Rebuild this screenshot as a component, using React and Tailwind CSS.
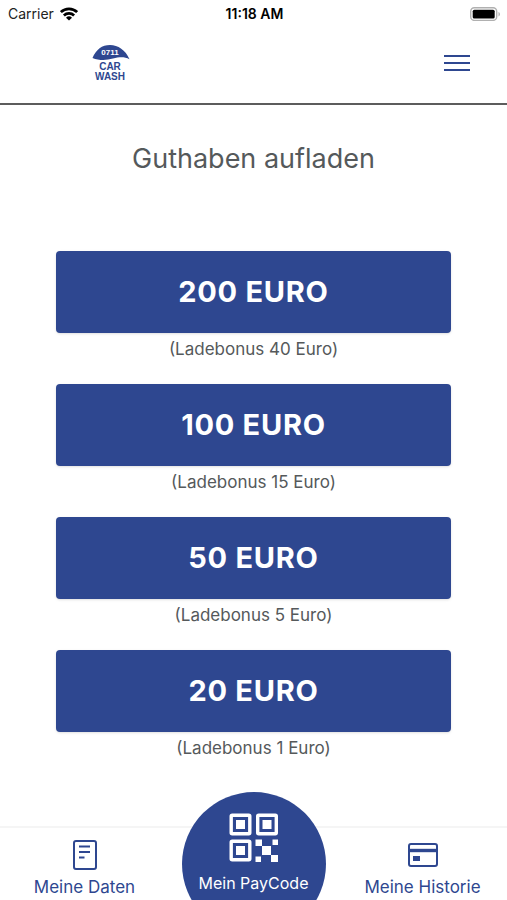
import React from 'react';

const AMOUNTS = [
  { euro: 200, bonus: 40 },
  { euro: 100, bonus: 15 },
  { euro: 50, bonus: 5 },
  { euro: 20, bonus: 1 },
];

function WifiIcon() {
  return (
    <svg viewBox="0 0 18 14" className="h-[14px] w-[18px]" fill="none" stroke="#000" strokeWidth="2.7">
      <path d="M.9 5.1a11.6 11.6 0 0 1 16.2 0" />
      <path d="M3.9 8.5a7.3 7.3 0 0 1 10.2 0" />
      <path d="M9 13.6 6 10.8a4.3 4.3 0 0 1 6 0z" fill="#000" stroke="none" />
    </svg>
  );
}

function BatteryIcon() {
  return (
    <svg viewBox="0 0 32 14" className="h-[14px] w-8">
      <rect x="1.700" y="0.8" width="26" height="12.6" rx="3.6" fill="#fff" stroke="#b0b0b0" strokeWidth="1.4" />
      <rect x="3.700" y="2.7" width="22" height="8.8" rx="1.6" fill="#000" />
      <path d="M29.500 5v4.4c1.9-.7 1.9-3.7 0-4.4z" fill="#b0b0b0" />
    </svg>
  );
}

function Logo() {
  return (
    <svg viewBox="0 0 40 38" className="h-[38px] w-10" role="img" aria-label="0711 Car Wash">
      <path d="M2.500 14C6 5.500 12 1 20 1s15.500 5 19.500 14.200c-5-2.600-10-2.500-16.500-.6-7 2-14 2-20.500-.6z" fill="#2e4790" />
      <g fontFamily="'Liberation Sans', Arial, sans-serif" fontWeight="700" textAnchor="middle">
        <text x="20" y="10.500" fontSize="8" fill="#fff">0711</text>
        <text x="20" y="26" fontSize="10" fill="#2e4790">CAR</text>
        <text x="20" y="36" fontSize="10" fill="#2e4790">WASH</text>
      </g>
    </svg>
  );
}

function DocumentIcon() {
  return (
    <svg viewBox="0 0 26 32" className="h-8 w-[26px]" fill="none" stroke="#2e4790" strokeWidth="2">
      <rect x="2" y="2" width="22" height="28" rx="2" />
      <path d="M7 7.500h11M7 13h11M7 18.500h5.500" />
    </svg>
  );
}

function CardIcon() {
  return (
    <svg viewBox="0 0 32 26" className="h-[26px] w-8" fill="none" stroke="#2e4790" strokeWidth="2">
      <rect x="2" y="2" width="28" height="22" rx="2" />
      <path d="M2 8.500h28" strokeWidth="3.400" />
      <rect x="6" y="14" width="7" height="5" fill="#2e4790" stroke="none" />
    </svg>
  );
}

function QrIcon() {
  return (
    <svg viewBox="0 0 50 50" className="h-[50px] w-[50px]" fill="#fff">
      <g fill="none" stroke="#fff" strokeWidth="3.400">
        <rect x="2.200" y="2.200" width="18.600" height="18.600" rx="1" />
        <rect x="28.700" y="2.200" width="18.600" height="18.600" rx="1" />
        <rect x="2.200" y="28.200" width="18.600" height="18.600" rx="1" />
      </g>
      <path d="M7 7h9v9H7zM33.500 7h9v9h-9zM7 33h9v9H7z" />
      <path d="M26.500 26.500h6.500v6.500h-6.500zM43.500 26.500H49V32h-5.500zM33 33h9v9h-9zM26.500 43.500H32V49h-5.500zM42 42h7v7h-7z" />
    </svg>
  );
}

export default function App() {
  return (
    <div className="flex min-h-screen flex-col bg-white font-['Inter',sans-serif] text-[#55595b]">
      <div className="grid h-7 grid-cols-3 items-center pl-2 pr-1.5 text-sm text-black">
        <div className="flex items-center gap-1.5">
          <span className="text-[#222]">Carrier</span>
          <WifiIcon />
        </div>
        <span className="text-center font-semibold">11:18 AM</span>
        <div className="flex justify-end">
          <BatteryIcon />
        </div>
      </div>

      <header className="flex h-[77px] items-center justify-between border-b-2 border-[#5c5c5c] pb-1.5 pr-9 pl-[90px]">
        <Logo />
        <button type="button" aria-label="Menü" className="flex h-9 w-7 flex-col items-center justify-center gap-[5px]">
          <span className="h-0.5 w-[26px] bg-[#2e4790]" />
          <span className="h-0.5 w-[26px] bg-[#2e4790]" />
          <span className="h-0.5 w-[26px] bg-[#2e4790]" />
        </button>
      </header>

      <main className="flex-1 px-14 pt-9">
        <h1 className="text-center text-[27px] leading-9">Guthaben aufladen</h1>
        <ul className="mt-[74px]">
          {AMOUNTS.map(({ euro, bonus }) => (
            <li key={euro} className="mb-[21px] text-center">
              <button
                type="button"
                className="h-[82px] w-full rounded bg-[#2e4790] text-[29px] font-bold tracking-wide text-white shadow"
              >
                {euro} EURO
              </button>
              <p className="pt-0.5 text-[17px] leading-7">(Ladebonus {bonus} Euro)</p>
            </li>
          ))}
        </ul>
      </main>

      <nav className="sticky bottom-0 grid grid-cols-3 grid-rows-[108px] items-end overflow-hidden text-[17px] text-[#2e4790]">
        <div className="absolute inset-x-0 bottom-0 h-[74px] border-t-2 border-[#f5f5f5] bg-white" />
        <a href="#daten" className="relative flex flex-col items-center pb-px">
          <DocumentIcon />
          <span className="mt-1 leading-6">Meine Daten</span>
        </a>
        <a
          href="#paycode"
          className="relative flex h-36 w-36 flex-col items-center self-start justify-self-center rounded-full bg-[#2e4790] pt-[21px] text-base text-white"
        >
          <QrIcon />
          <span className="mt-2 leading-6">Mein PayCode</span>
        </a>
        <a href="#historie" className="relative flex flex-col items-center pb-px">
          <CardIcon />
          <span className="mt-[7px] leading-6">Meine Historie</span>
        </a>
      </nav>
    </div>
  );
}
